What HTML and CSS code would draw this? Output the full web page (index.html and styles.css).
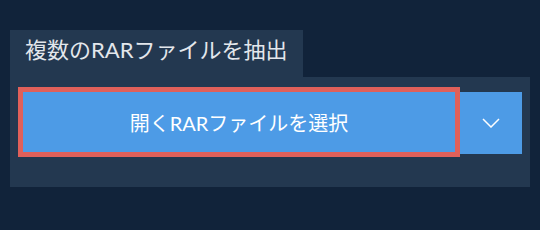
FILE: index.html
```html
<!DOCTYPE html>
<html>
<head>
    <meta charset="UTF-8">
    <title>RAR抽出</title>
    <link rel="stylesheet" href="styles.css">
</head>
<body>
    <div class="extractor">
        <div class="tab">複数のRARファイルを抽出</div>
        <div class="panel">
            <div class="actions">
                <button class="open-btn">開くRARファイルを選択</button>
                <button class="toggle-btn">
                    <svg width="18" height="10" viewBox="0 0 18 10">
                        <polyline points="1,1 9,9 17,1" fill="none" stroke="#fff" stroke-width="1.5"/>
                    </svg>
                </button>
            </div>
        </div>
    </div>
</body>
</html>
```

FILE: styles.css
```css
body {
    margin: 0;
    padding: 0;
    background-color: #11233a;
    font-family: Lato, "Noto Sans CJK JP", sans-serif;
    height: 100vh;
}
.extractor {
    width: 520px;
    padding: 30px 10px 0 10px;
}
.tab {
    width: 293px;
    height: 47px;
    box-sizing: border-box;
    padding-left: 15px;
    line-height: 40px;
    font-size: 22px;
    color: #e3e7ec;
    background-color: #233850;
}
.panel {
    height: 110px;
    box-sizing: border-box;
    padding: 10px 8px 0 8px;
    background-color: #233850;
}
.actions {
    display: flex;
    align-items: flex-start;
}
.open-btn {
    width: 442px;
    height: 70px;
    box-sizing: border-box;
    border: 5px solid #e0605a;
    background-color: #4d9be6;
    color: #fff;
    font-family: inherit;
    font-size: 20px;
    padding: 0;
    cursor: pointer;
}
.toggle-btn {
    width: 62px;
    height: 62px;
    margin-top: 5px;
    border: none;
    padding: 0;
    background-color: #4d9be6;
    display: flex;
    align-items: center;
    justify-content: center;
    cursor: pointer;
}
```
